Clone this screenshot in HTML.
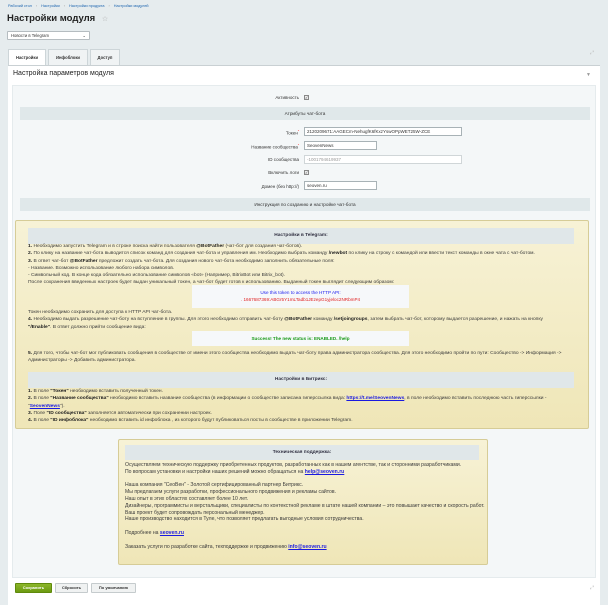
<!DOCTYPE html>
<html><head><meta charset="utf-8"><style>
*{box-sizing:border-box;margin:0;padding:0}
body{width:608px;height:600px;overflow:hidden;background:#e6ecee;font-family:"Liberation Sans",sans-serif;color:#333;position:relative;font-size:4.5px}
.a{position:absolute}
.bc{left:8px;top:4px;color:#2067b0;font-size:3.8px;white-space:nowrap}
.bc span{color:#999;margin:0 4px}
h1{position:absolute;left:7px;top:13px;font-size:9.5px;font-weight:bold;color:#222}
.sel{left:7px;top:31px;width:83px;height:9px;background:#fff;border:1px solid #b5bcc0;border-radius:1px;font-size:4.2px;padding:1px 3px;line-height:6px}
.tab{top:49px;height:16px;border:1px solid #cdd5d8;border-bottom:none;background:#f0f3f4;font-size:4.2px;font-weight:bold;text-align:center;line-height:15px;color:#333}
.panel{left:8px;top:65px;width:592px;height:540px;background:#fff;border-top:1px solid #c9d0d3}
.hd{left:13px;top:70px;font-size:7px;color:#222}
.inner{left:12px;top:85px;width:584px;height:493px;background:#f4f7f8;border:1px solid #e5ebed}
.lab{text-align:right;font-size:4.5px;color:#333;white-space:nowrap}
.inp{background:#fff;border:1px solid #a8b2b6;height:9px;font-size:4.5px;padding:0 2px;line-height:7px;white-space:nowrap;overflow:hidden}
.cb{width:5px;height:5px;border:1px solid #888;background:#eee;font-size:4px;line-height:3px;text-align:center}
.sec{left:20px;width:570px;height:13px;background:#e0e8ea;font-size:4.7px;text-align:center;line-height:13px;color:#333}
.y{background:linear-gradient(#f7f2d6,#efe6b7);border:1px solid #d6cc97;border-radius:2px}
.gh{background:#e0e7e9;font-weight:bold;text-align:center;color:#334;font-size:4.8px}
.t{font-size:4.9px;line-height:7.3px;color:#3a3a3a;white-space:nowrap}
.t b{color:#222}
a{color:#1a1ae0;font-weight:bold;text-decoration:underline}
.wb{background:#f6f8fa;text-align:center;font-size:4.6px;line-height:7px}
.btn{top:583px;height:10px;border:1px solid #c5cbcd;background:#f0f2f2;font-size:4px;font-weight:bold;line-height:8px;text-align:center;border-radius:1px}
</style></head><body>
<div class="a bc">Рабочий стол<span>›</span>Настройки<span>›</span>Настройки продукта<span>›</span>Настройки модулей</div>
<h1>Настройки модуля <span style="color:#aaa;font-size:7px;margin-left:4px;font-weight:normal">☆</span></h1>
<div class="a sel">Новости в Telegram<span style="float:right">⌄</span></div>
<div class="a tab" style="left:8px;width:38px;background:#fff;height:17px">Настройки</div>
<div class="a tab" style="left:48px;width:40px">Инфоблоки</div>
<div class="a tab" style="left:90px;width:30px">Доступ</div>
<div class="a" style="left:590px;top:50px;color:#bbb;font-size:5px">⤢</div>
<div class="a panel"></div>
<div class="a hd">Настройка параметров модуля</div>
<div class="a" style="left:586px;top:72px;color:#999;font-size:5px">▼</div>
<div class="a inner"></div>

<div class="a lab" style="right:309px;top:95px">Активность</div><div class="a cb" style="left:304px;top:95px">✓</div>
<div class="a sec" style="top:107px">Атрибуты чат-бота</div>
<div class="a lab" style="right:309px;top:129px">Токен<sup style="color:red;font-size:3px">*</sup></div><div class="a inp" style="left:304px;top:127px;width:158px">2120209671:AAGECm-NehugfK6fKxzYswOPpWET25W-ZCE</div>
<div class="a lab" style="right:309px;top:143px">Название сообщества<sup style="color:red;font-size:3px">*</sup></div><div class="a inp" style="left:304px;top:141px;width:73px">SeovenNews</div>
<div class="a lab" style="right:309px;top:157px">ID сообщества</div><div class="a inp" style="left:304px;top:155px;width:158px;color:#999;border-color:#d0d6d8">-1001794619937</div>
<div class="a lab" style="right:309px;top:170px">Включить логи</div><div class="a cb" style="left:304px;top:170px">✓</div>
<div class="a lab" style="right:309px;top:184px">Домен (без http://)</div><div class="a inp" style="left:304px;top:181px;width:73px">seoven.ru</div>
<div class="a sec" style="top:198px">Инструкция по созданию и настройке чат-бота</div>

<div class="a y" style="left:15px;top:220px;width:574px;height:209px"></div>
<div class="a gh" style="left:28px;top:228px;width:546px;height:16px;line-height:16px">Настройки в Telegram:</div>
<div class="a t" style="left:28px;top:243px">
<b>1.</b> Необходимо запустить Telegram и в строке поиска найти пользователя <b>@BotFather</b> (чат-бот для создания чат-ботов).<br>
<b>2.</b> По клику на название чат-бота выводится список команд для создания чат-бота и управления им. Необходимо выбрать команду <b>/newbot</b> по клику на строку с командой или ввести текст команды в окне чата с чат-ботом.<br>
<b>3.</b> В ответ чат-бот <b>@BotFather</b> предложит создать чат-бота. Для создания нового чат-бота необходимо заполнить обязательные поля:<br>
- Название. Возможно использование любого набора символов.<br>
- Символьный код. В конце кода обязательно использование символов «bot» (Например, BitrixBot или Bitrix_bot).<br>
После сохранения введенных настроек будет выдан уникальный токен, а чат-бот будет готов к использованию. Выданный токен выглядит следующим образом:</div>
<div class="a wb" style="left:192px;top:285px;width:217px;height:23px;padding-top:4px"><span style="color:#2222ee">Use this token to access the HTTP API:</span><br><span style="color:#e02020">. 1667687369:ABGr5Y1mLTadb1JEzepG1yjeloc2NRbmP4</span></div>
<div class="a t" style="left:28px;top:309px">Токен необходимо сохранить для доступа к HTTP API чат-бота.<br>
<b>4.</b> Необходимо выдать разрешение чат-боту на вступление в группы. Для этого необходимо отправить чат-боту <b>@BotFather</b> команду <b>/setjoingroups</b>, затем выбрать чат-бот, которому выдается разрешение, и нажать на кнопку<br>
<b>"/Enable"</b>. В ответ должно прийти сообщение вида:</div>
<div class="a wb" style="left:192px;top:331px;width:217px;height:15px;line-height:15px;color:#1a9a1a;font-weight:bold">Success! The new status is: ENABLED. /help</div>
<div class="a t" style="left:28px;top:350px"><b>5.</b> Для того, чтобы чат-бот мог публиковать сообщения в сообществе от имени этого сообщества необходимо выдать чат-боту права администратора сообщества. Для этого необходимо пройти по пути: Сообщество -&gt; Информация -&gt;<br>Администраторы -&gt; Добавить администратора.</div>
<div class="a gh" style="left:28px;top:372px;width:546px;height:16px;line-height:16px">Настройки в Битрикс:</div>
<div class="a t" style="left:28px;top:388px">
<b>1.</b> В поле <b>"Токен"</b> необходимо вставить полученный токен.<br>
<b>2.</b> В поле <b>"Название сообщества"</b> необходимо вставить название сообщества (в информации о сообществе записана гиперссылка вида: <a>https://t.me/SeovenNews</a>, в поле необходимо вставить последнюю часть гиперссылки -<br>
"<a>SeovenNews</a>").<br>
<b>3.</b> Поле <b>"ID сообщества"</b> заполняется автоматически при сохранении настроек.<br>
<b>4.</b> В поле <b>"ID инфоблока"</b> необходимо вставить id инфоблока , из которого будут публиковаться посты в сообществе в приложении Telegram.</div>

<div class="a y" style="left:118px;top:439px;width:370px;height:126px"></div>
<div class="a gh" style="left:125px;top:445px;width:354px;height:15px;line-height:15px">Техническая поддержка:</div>
<div class="a t" style="left:125px;top:462px;line-height:6.8px;font-size:5.1px">Осуществляем техническую поддержку приобретенных продуктов, разработанных как в нашем агентстве, так и сторонними разработчиками.<br>
По вопросам установки и настройки наших решений можно обращаться на <a>help@seoven.ru</a><br><br>
Наша компания "СеоВен" - Золотой сертифицированный партнер Битрикс.<br>
Мы предлагаем услуги разработки, профессионального продвижения и рекламы сайтов.<br>
Наш опыт в этих областях составляет более 10 лет.<br>
Дизайнеры, программисты и верстальщики, специалисты по контекстной рекламе в штате нашей компании – это повышает качество и скорость работ.<br>
Ваш проект будет сопровождать персональный менеджер.<br>
Наше производство находится в Туле, что позволяет предлагать выгодные условия сотрудничества.<br><br>
Подробнее на <a>seoven.ru</a><br><br>
Заказать услуги по разработке сайта, техподдержке и продвижению <a>info@seoven.ru</a></div>

<div class="a btn" style="left:15px;width:37px;background:linear-gradient(#8cb62a,#6c9a10);border-color:#5f8a0c;color:#fff">Сохранить</div>
<div class="a btn" style="left:55px;width:33px">Сбросить</div>
<div class="a btn" style="left:91px;width:45px">По умолчанию</div>
<div class="a" style="left:590px;top:585px;color:#bbb;font-size:5px">⤢</div>
</body></html>
